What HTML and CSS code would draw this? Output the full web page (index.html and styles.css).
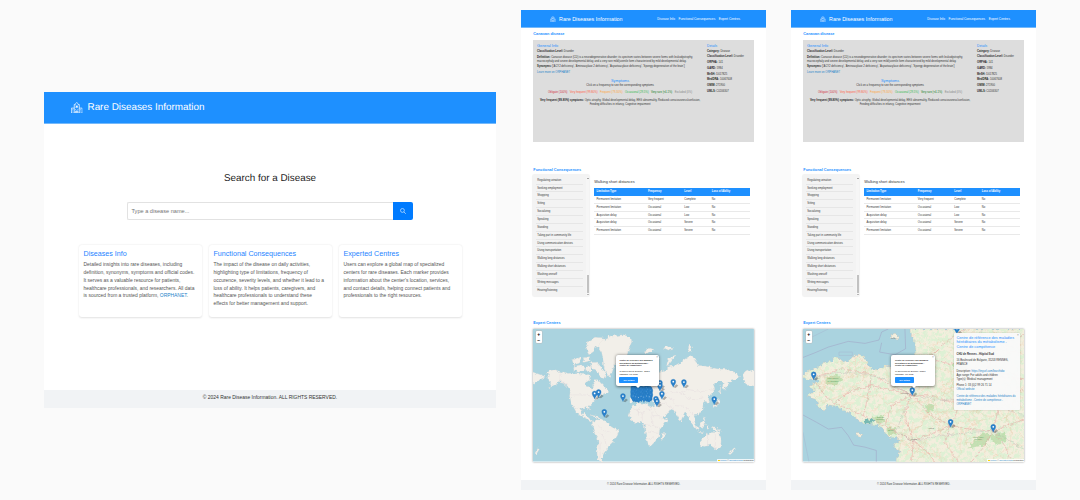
FILE: index.html
```html
<!DOCTYPE html>
<html lang="en">
<head>
<meta charset="utf-8">
<title>Rare Diseases Information</title>
<link rel="stylesheet" href="styles.css">
</head>
<body>
<svg class="defs" aria-hidden="true">
  <defs>
    <symbol id="hospital" viewBox="0 0 16 16">
      <g fill="none" stroke="#fff" stroke-width="1">
        <path d="M4.5 15.5V3.5h1.5V2.5L8 .7l2 1.8v1h1.500v12M.5 15.500v-7h4M11.500 8.500h4v7M0 15.500h16M6.500 15.500v-3h3v3M8 15.500v-3"/>
        <path d="M8 4.500v4M6.200 5.500l3.600 2M9.800 5.500l-3.600 2"/>
        <path d="M2 10.500h1M2 12.500h1M13 10.500h1M13 12.500h1M6 10.500h1M9 10.500h1"/>
      </g>
    </symbol>
    <g id="pin">
      <path d="M1 0 L9 -9 15 -5 7 2Z" fill="#000" opacity=".28"/>
      <path d="M0 0C-2-7-7.500-10-7.500-16.500A7.500 7.500 0 0 1 7.500-16.500C7.500-10 2-7 0 0Z" fill="#2a81cb" stroke="#2472b4" stroke-width=".8"/>
      <circle cx="0" cy="-16.500" r="2.700" fill="#fff"/>
    </g>
    <g id="cluster-pin">
      <path d="M0 0C-2-7-7.500-10-7.500-16.500A7.500 7.500 0 0 1 7.500-16.500C7.500-10 2-7 0 0Z" fill="#2a81cb" stroke="#2472b4" stroke-width=".8"/>
      <circle cx="0" cy="-16.500" r="1.700" fill="#9cc8ea"/>
    </g>
    <filter id="rough" x="-5%" y="-5%" width="110%" height="110%">
      <feTurbulence type="fractalNoise" baseFrequency=".09" numOctaves="3" seed="4"/>
      <feDisplacementMap in="SourceGraphic" scale="14" xChannelSelector="R" yChannelSelector="G"/>
    </filter>
    <filter id="fields" x="0" y="0" width="100%" height="100%">
      <feTurbulence type="fractalNoise" baseFrequency=".075" numOctaves="4" seed="9"/>
      <feColorMatrix values="0 0 0 0 .73  0 0 0 0 .87  0 0 0 0 .66  6 0 0 0 -2.600"/>
      <feComposite in2="SourceGraphic" operator="in"/>
    </filter>
  </defs>
</svg>

<main class="board">
  <section class="home">
    <header class="home-header"><svg><use href="#hospital"/></svg><span>Rare Diseases Information</span></header>
    <div class="home-body">
      <h1>Search for a Disease</h1>
      <div class="search">
        <div class="search-input">Type a disease name...</div>
        <div class="search-button"><svg viewBox="0 0 16 16"><circle cx="6.500" cy="6.500" r="5.200"/><path d="M10.500 10.500l5 5"/></svg></div>
      </div>
      <div class="cards">
        <article class="card"><h2>Diseases Info</h2><p>Detailed insights into rare diseases, including<br>definition, synonyms, symptoms and official codes.<br>It serves as a valuable resource for patients,<br>healthcare professionals, and researchers. All data<br>is sourced from a trusted platform, <a>ORPHANET</a>.</p></article>
        <article class="card"><h2>Functional Consequences</h2><p>The impact of the disease on daily activities,<br>highlighting type of limitations, frequency of<br>occurence, severity levels, and whether it lead to a<br>loss of ability. It helps patients, caregivers, and<br>healthcare professionals to understand these<br>effects for better management and support.</p></article>
        <article class="card"><h2>Experted Centres</h2><p>Users can explore a global map of specialized<br>centers for rare diseases. Each marker provides<br>information about the center's location, services,<br>and contact details, helping connect patients and<br>professionals to the right resources.</p></article>
      </div>
    </div>
    <footer class="home-footer">© 2024 Rare Disease Information. ALL RIGHTS RESERVED.</footer>
  </section>

  <section class="detail" data-map="world"></section>
  <section class="detail" data-map="region"></section>
</main>

<template id="detail-template">
  <header class="detail-header">
    <div class="brand"><svg><use href="#hospital"/></svg><span>Rare Diseases Information</span></div>
    <nav><span>Disease Info</span><span>Functional Consequences</span><span>Expert Centres</span></nav>
  </header>
  <h2 class="section-title first">Canavan disease</h2>
  <div class="info">
    <div class="info-main">
      <h3>General Info</h3>
      <p><b>Classification Level:</b> Disorder</p>
      <p class="gap"><b>Definition:</b> Canavan disease (CD) is a neurodegenerative disorder; its spectrum varies between severe forms with leukodystrophy,<br>macrocephaly and severe developmental delay, and a very rare mild/juvenile form characterized by mild developmental delay.</p>
      <p class="gap"><b>Synonyms:</b> ['ACY2 deficiency', 'Aminoacylase 2 deficiency', 'Aspartoacylase deficiency', 'Spongy degeneration of the brain']</p>
      <p class="gap"><a>Learn more on ORPHANET</a></p>
      <h3 class="symptoms">Symptoms</h3>
      <p class="center">Click on a frequency to see the corresponding symptoms</p>
      <div class="frequencies"><span class="f-red">Obligate (100%)</span><span class="f-tomato">Very frequent (99-80%)</span><span class="f-orange">Frequent (79-30%)</span><span class="f-lime">Occasional (29-5%)</span><span class="f-green">Very rare (&lt;4-1%)</span><span class="f-grey">Excluded (0%)</span></div>
      <p class="center"><b>Very frequent (99-80%) symptoms:</b> Optic atrophy, Global developmental delay, EEG abnormality, Reduced consciousness/confusion,<br>Feeding difficulties in infancy, Cognitive impairment</p>
    </div>
    <div class="info-side">
      <h3>Details</h3>
      <p><b>Category:</b> Disease</p><p><b>Classification Level:</b> Disorder</p><p><b>ORPHA:</b> 141</p><p><b>GARD:</b> 5984</p><p><b>MeSH:</b> D017825</p><p><b>MedDRA:</b> 10067608</p><p><b>OMIM:</b> 271900</p><p><b>UMLS:</b> C0206307</p>
    </div>
  </div>
  <h2 class="section-title second">Functional Consequences</h2>
  <div class="consequences">
    <div class="activity-list">
      <ul><li>Regulating urination</li><li>Seeking employment</li><li>Shopping</li><li>Sitting</li><li>Socializing</li><li>Speaking</li><li>Standing</li><li>Taking part in community life</li><li>Using communication devices</li><li>Using transportation</li><li>Walking long distances</li><li>Walking short distances</li><li>Washing oneself</li><li>Writing messages</li><li>Hearing/listening</li></ul>
      <div class="scrollbar"><i class="up"></i><i class="thumb"></i><i class="down"></i></div>
    </div>
    <div class="limitations">
      <h4>Walking short distances</h4>
      <div class="row head"><span>Limitation Type</span><span>Frequency</span><span>Level</span><span>Loss of Ability</span></div>
      <div class="row"><span>Permanent limitation</span><span>Very frequent</span><span>Complete</span><span>No</span></div>
      <div class="row"><span>Permanent limitation</span><span>Occasional</span><span>Low</span><span>No</span></div>
      <div class="row"><span>Acquisition delay</span><span>Occasional</span><span>Low</span><span>No</span></div>
      <div class="row"><span>Acquisition delay</span><span>Occasional</span><span>Severe</span><span>No</span></div>
      <div class="row"><span>Permanent limitation</span><span>Occasional</span><span>Severe</span><span>No</span></div>
    </div>
  </div>
  <h2 class="section-title third">Expert Centres</h2>
  <div class="map">
    <div class="zoom-control"><span>+</span><span>−</span></div>
    <div class="popup"><i class="close">×</i><b>Centre de référence des maladies<br>héréditaires du métabolisme -<br>Centre de compétence</b><p>16 Boulevard de Bulgarie, 35203<br>RENNES, FRANCE</p><span class="popup-button">See details</span></div>
    <div class="attribution"><i class="flag"></i><a>Leaflet</a> | © <a>OpenStreetMap</a> contributors</div>
  </div>
  <footer class="detail-footer">© 2024 Rare Disease Information. ALL RIGHTS RESERVED.</footer>
</template>

<template id="world-map">
  <svg class="map-canvas" viewBox="54 41 663 396" preserveAspectRatio="none">
    <rect x="54" y="41" width="663" height="396" fill="#aad3df"/>
    <g fill="#f2efe9" stroke="#dfd8d6" stroke-width=".8" filter="url(#rough)">
      <path d="M97 172L105 165 120 163 135 168 160 174 185 172 200 177 215 174 228 182 222 192 212 198 213 208 222 214 230 224 232 212 240 200 248 192 258 203 268 213 277 222 278 230 262 236 250 246 240 254 234 262 222 272 224 286 216 276 200 276 196 286 204 298 212 292 216 300 222 308 236 318 228 316 212 308 196 300 184 290 176 275 168 258 164 242 166 226 158 212 146 202 132 198 118 208 100 218 112 206 104 198 96 192 104 182Z"/>
      <path d="M48 168L72 176 92 184 80 190 68 196 60 204 48 198Z"/>
      <path d="M172 134L195 126 198 142 176 148ZM178 152L205 148 212 162 190 170 176 164ZM205 128L222 124 226 136 208 140ZM212 100L222 76 240 66 268 68 262 82 246 92 236 108 222 118ZM226 142L246 140 262 158 272 174 268 190 254 184 246 168 230 160ZM214 152L224 150 226 166 216 168Z"/>
      <path d="M248 92L262 75 290 62 325 58 347 66 350 80 342 100 336 120 312 134 297 150 290 172 282 184 272 170 266 150 264 130 260 110Z"/>
      <path d="M232 320L245 312 262 313 278 322 290 334 312 344 308 358 298 374 288 384 278 398 268 410 262 422 260 438 248 432 246 410 250 388 248 368 238 352 234 338Z"/>
      <path d="M352 270L370 262 392 264 408 272 426 272 438 296 446 308 458 310 446 328 434 342 432 362 420 378 408 390 400 388 394 368 390 344 388 328 378 320 360 320 348 312 342 298Z"/>
      <path d="M440 356l8-8 2 10-6 16-6-4ZM400 150L415 118 430 128 432 160 418 182 400 190ZM345 262V244L372 240 368 228 385 218 430 205 432 262 412 258 402 246 385 240 370 260Z"/>
      <path d="M415 212L428 180 432 168 452 164 465 152 480 150 495 142 508 132 525 122 542 130 550 150 575 152 605 160 635 162 660 170 677 182 665 192 650 196 640 206 630 225 623 214 625 200 610 198 596 208 600 220 590 234 580 247 584 260 575 264 570 256 563 263 565 280 553 297 537 300 540 312 536 327 525 314 517 298 509 290 497 318 487 300 480 288 465 282 456 296 437 312 423 290 415 272 420 256 410 240Z"/>
      <path d="M683 174L700 163 722 168V212L695 208 687 195ZM557 374L571 360 587 350 601 350 609 346 619 372 617 392 603 402 587 388 571 392 557 390Z"/>
      <path d="M528 320l8 0 14 18-4 4ZM552 330l12-14 8 10-10 12ZM575 330l6 0 0 12-6-4ZM592 332l16 4 12 12-20-6ZM562 300l8 6 4 14-8-8ZM546 346l20 2-2 3-18-2ZM596 270l8-4 6-16 3-2 2 14-14 12ZM614 210l4 22-4 0ZM642 412l16-16 4 4-15 16ZM60 412l10-16 3 4-9 15ZM225 298l22 4 10 6-14-2ZM455 150l6-18 16-14 3 4-17 20-4 12ZM445 98l16-6 16 6-20 6ZM516 104l8-16 6 12-2 10ZM385 110l18-12 14 4-14 12Z"/>
    </g>
    <g fill="none" stroke="#ddd0d7" stroke-width=".9" filter="url(#rough)">
      <path d="M135 170V196L160 208M166 238H212L230 242 252 236M180 276L205 282M250 330L266 346 286 350M252 350L270 372 274 392M255 378L256 430M352 278L382 292 382 318M382 292L408 276 412 300 438 300M388 328L415 330 434 338M400 346L430 350M396 370L420 366M408 300L415 330M372 262L370 300M420 256L450 262 478 282M440 238L470 228 500 232 520 222 560 228 598 222M500 232L520 248 550 250 565 246M480 270L510 272 535 296M456 240L480 260M578 350V392M601 350V402M415 214L440 220 452 238"/>
    </g>
    <path d="M347 222L412 215V254L400 259 385 252 370 259 354 258 347 244Z" fill="#2a7fc6"/>
    <g class="pins"></g>
  </svg>
</template>

<template id="region-map">
  <svg class="map-canvas" viewBox="54 41 663 396" preserveAspectRatio="none">
    <defs><clipPath id="coast"><path id="land" d="M54 182L62 170 90 160 110 152 118 140 140 138 148 128 165 130 178 142 200 128 222 116 238 126 250 150 262 160 282 164 300 150 318 156 340 170 380 165 396 150 392 122 392 88 383 62 374 41H730V450H332L336 422 346 408 326 396 330 384 346 374 334 362 315 366 298 348 290 334 268 326 240 324 214 310 200 296 175 282 150 270 130 268 114 286 98 272 96 252 66 242 92 224 72 214 84 204 104 198 94 190 66 192Z"/></clipPath></defs>
    <rect x="54" y="41" width="663" height="396" fill="#aad3df"/>
    <g fill="none" stroke="#9b83b5" stroke-width="1.300" opacity=".75"><path d="M54 126L90 112 130 95 190 78 240 84 282 74 290 50 310 41M290 82L284 110 330 118 362 100 360 41M54 298L95 320 130 340 170 335 190 360 206 388 240 394 274 404V438"/><path d="M130 41L54 78M54 350L72 438M162 110h40v10h-40Z" stroke-width=".7"/></g>
    <g filter="url(#rough)">
      <g fill="#f3eedd" stroke="#c3b9b0" stroke-width="1"><use href="#land"/><path d="M214 352l6-2 14 6-8 6-12-5ZM318 58l12-4 12 7-4 10-18-2Z"/></g>
      <g clip-path="url(#coast)">
        <rect x="54" y="41" width="676" height="410" fill="#fff" filter="url(#fields)"/>
        <g fill="#b4d8a2" opacity=".7"><path d="M124 188L155 174 172 190 152 208 126 206ZM262 306L290 296 302 318 278 324ZM304 338L330 334 334 356 310 358ZM548 398L590 350 620 356 604 388ZM500 150L540 130 550 160 520 180ZM420 270L440 262 450 280 430 290ZM610 360L660 350 665 374 630 386Z"/></g>
        <g class="minor-roads" fill="none" stroke="#ecc39f" stroke-width=".8"></g>
        <g fill="none" stroke="#e39a9a" stroke-width="1.300"><path d="M85 184L120 176 170 160 220 168 260 176 310 205 380 237 440 242 500 260 560 244 620 242 717 224M85 184L112 230 145 262 190 280 235 300 300 330 385 376 450 350 497 330 560 342 625 345 717 310M380 237L360 300 385 376 380 438M380 237L390 180 430 130 470 90 540 41M497 330L520 280 560 244 600 180 640 90 717 60M385 376L430 410 450 438M497 330L480 380 520 438M625 345L600 390 560 438M625 345L660 390 680 438M625 345L640 280 620 242M430 130L520 150 600 180 717 190M235 300L250 240 260 176M300 330L320 270 380 237M145 262L200 225 260 210 380 237M497 330L440 300 380 237"/></g>
        <g fill="none" stroke="#a9a7aa" stroke-width=".9"><path d="M85 190L150 170 230 174 300 190 380 240 470 255 560 248 717 300M380 240L350 300 335 350 385 376 460 360 560 350 625 345M625 345L717 400M560 248L590 41"/></g>
        <path d="M236 312l12-4 4 8 12-6 6 8-10 6-20-2Z" fill="#78b9b2"/>
      </g>
    </g>
    <g class="labels" fill="#6f746d" font-size="6" text-anchor="middle"><text x="360" y="236">Rennes</text><text x="386" y="374">Nantes</text><text x="438" y="340">Angers</text><text x="144" y="190" fill="#5b985b">Parc naturel</text><text x="144" y="198" fill="#5b985b">d'Armorique</text><text x="286" y="306" fill="#5b985b">Golfe du</text><text x="286" y="314" fill="#5b985b">Morbihan</text><text x="318" y="346" fill="#5b985b">Brière</text><text x="327" y="72">Jersey</text><text x="580" y="366" fill="#5b985b">Loire-Anjou</text><text x="580" y="374" fill="#5b985b">Touraine</text></g>
    <g class="pins"></g>
  </svg>
  <aside class="centre-panel"><i class="close">×</i><h4>Centre de référence des maladies<br>héréditaires du métabolisme -<br>Centre de compétence</h4><p><b>CHU de Rennes - Hôpital Sud</b></p><p>16 Boulevard de Bulgarie, 35203 RENNES,<br>FRANCE</p><p>Description: <a>https://tinyurl.com/bxzchtdw</a><br>Age range: For adults and children<br>Type(s): Medical management</p><p>Phone 1: 33 (0)2 99 26 71 14<br><a>Official website</a></p><p><a>Centre de référence des maladies héréditaires du<br>métabolisme - Centre de compétence -<br>ORPHANET</a></p></aside>
</template>
<script src="script.js"></script>
</body>
</html>
```
FILE: styles.css
```css
* { box-sizing: border-box; }
body { margin: 0; width: 1080px; height: 500px; overflow: hidden; background: #fafafa; color: #333; font-family: "Liberation Sans", Arial, sans-serif; }
h1, h2, h3, h4, p, ul { margin: 0; padding: 0; font-weight: 400; }
i { font-style: normal; }
a { color: #2483c9; }
.defs { position: absolute; width: 0; height: 0; }
.board { display: flex; align-items: flex-start; height: 500px; padding-left: 44px; }

.home { display: flex; flex-direction: column; width: 452px; height: 316px; margin-top: 92px; margin-right: 25.3px; background: #fff; font-size: 4.94px; }
.home-header { display: flex; align-items: center; gap: 5px; height: 32px; padding-left: 27px; background: #1e90ff; border-bottom: 1px solid #74b9fb; color: #fff; font-size: 9.9px; text-rendering: geometricPrecision; }
.home-header svg { width: 11.5px; height: 11.500px; }
.home-body { flex: 1; display: flex; flex-direction: column; align-items: center; padding-top: 49px; }
.home-body h1 { font-size: 9.9px; line-height: 12px; color: #222; text-rendering: geometricPrecision; }
.search { display: flex; width: 286px; height: 18px; margin-top: 17px; }
.search-input { flex: 1; padding-left: 3.500px; border: 1px solid #e2e2e2; border-right: 0; border-radius: 2px 0 0 2px; color: #757575; font-size: 5.600px; line-height: 16.500px; }
.search-button { display: grid; place-items: center; width: 20px; background: #007bff; border-radius: 0 2px 2px 0; }
.search-button svg { width: 6px; height: 6px; fill: none; stroke: #fff; stroke-width: 1.500; }
.cards { display: grid; grid-template-columns: repeat(3, 123px); gap: 7px; margin-top: 24.500px; }
.card { height: 72px; padding: 5.300px 5px 0; border-radius: 3px; background: #fff; box-shadow: 0 .7px 2px rgba(0, 0, 0, .12); }
.card h2 { color: #1e83ff; font-size: 7.150px; line-height: 9px; margin-bottom: 1.900px; }
.card p { line-height: 7.930px; color: #555; white-space: nowrap; }
.home-footer { height: 18px; background: #f1f3f5; text-align: center; line-height: 15.500px; }

.detail { display: flex; flex-direction: column; width: 244.700px; height: 480px; margin-top: 10px; margin-right: 25.300px; background: #fff; font-size: 2.690px; line-height: 4.100px; flex-shrink: 0; }
.detail p { white-space: nowrap; }
.detail-header { display: flex; justify-content: space-between; align-items: center; height: 18px; padding: .8px 25px 0 29px; background: #1e90ff; border-bottom: .8px solid #74b9fb; color: #fff; }
.brand { display: flex; align-items: center; gap: 3px; font-size: 5.360px; }
.brand svg { width: 5.800px; height: 5.800px; }
.detail-header nav { display: flex; gap: 3.600px; margin-right: 1px; padding-top: .6px; font-size: 3.180px; }
.section-title { margin: 0 12px; height: 5px; color: #1e90ff; font-size: 3.850px; font-weight: 700; line-height: 5px; }
.section-title.first { margin-top: 4.200px; }
.info { display: flex; gap: 4px; height: 102.700px; margin: 2.600px 12px 0; padding: 4.700px 0 0 3.800px; background: #ddd; color: #333; }
.info b, .consequences b { color: #222; }
.info-main { width: 166px; }
.info h3 { color: #1e90ff; font-size: 3.850px; line-height: 5px; }
.info-main h3:first-child { margin-bottom: .4px; }
.info-main .gap { margin-top: 1.600px; }
.info-main h3.symptoms { margin-top: 3.700px; text-align: center; }
.center { text-align: center; }
.frequencies { display: flex; justify-content: center; gap: 2.400px; margin: 3.600px 0 3.500px; white-space: nowrap; }
.f-red { color: #d32f3f; } .f-tomato { color: #ff6347; } .f-orange { color: #ffa53b; } .f-lime { color: #32b84d; } .f-green { color: #168022; } .f-grey { color: #888; }
.info-side p { margin-bottom: 1.650px; }
.info-side h3 { font-size: 3.300px; line-height: 4.700px; margin-bottom: .5px; }
.section-title.second { margin-top: 25.500px; }
.consequences { display: flex; gap: 5px; height: 121px; margin: 2.300px 12px 0; }
.activity-list { display: flex; justify-content: space-between; width: 56px; padding: 1.400px 0 0 3px; background: #f3f3f3; box-shadow: 0 0 1.500px rgba(0, 0, 0, .18); }
.activity-list ul { width: 47px; list-style: none; }
.activity-list li { height: 7.870px; padding-left: 1px; border-bottom: .5px solid #e6e6e6; line-height: 8px; }
.activity-list li:last-child { border: 0; }
.scrollbar { display: flex; flex-direction: column; align-items: center; width: 3px; background: #f6f6f6; }
.scrollbar .up, .scrollbar .down { border: .8px solid transparent; }
.scrollbar .up { border-bottom-color: #555; }
.scrollbar .down { border-top-color: #777; margin-top: 1px; }
.thumb { width: 2px; height: 18px; margin-top: 96.500px; background: #c1c1c1; }
.limitations { width: 156px; padding-top: 5px; }
.limitations h4 { height: 7.700px; font-size: 3.830px; line-height: 5px; }
.row { display: grid; grid-template-columns: 51.400px 36.400px 27.500px 1fr; height: 7.870px; padding-left: 2.200px; border-bottom: .5px solid #e9e9e9; line-height: 8.500px; }
.row.head { background: #1e90ff; color: #fff; font-weight: 700; border: 0; }
.section-title.third { margin-top: 24.300px; }

.map { position: relative; width: 220.900px; height: 132.500px; margin: 3.500px 12px 0; overflow: hidden; box-shadow: 0 0 2px rgba(0, 0, 0, .4); flex-shrink: 0; }
.map-canvas { display: block; width: 100%; height: 100%; }
.zoom-control { position: absolute; left: 2.500px; top: 2px; display: grid; width: 6px; height: 12px; background: #fff; border-radius: 1px; box-shadow: 0 0 0 .4px #bbb; color: #000; font-size: 5px; font-weight: 700; line-height: 6px; text-align: center; }
.popup { position: absolute; left: 82.300px; top: 26.300px; width: 43.500px; height: 31px; padding: 3.500px 3.800px 0; background: #fff; border-radius: 2px; box-shadow: 0 .7px 3px rgba(0, 0, 0, .5); color: #222; font-size: 2.080px; line-height: 2.750px; white-space: nowrap; }
.popup::after { content: ""; position: absolute; left: 20.500px; top: 31px; border: 2px solid transparent; border-top-color: #fff; }
.popup p { margin: 2.800px 0 1.200px; }
.popup-button { display: block; width: 19px; height: 6.500px; border-radius: .8px; background: #1e90ff; color: #fff; font-weight: 700; line-height: 7px; text-align: center; }
.close { position: absolute; right: 1px; top: 1px; color: #777; font-size: 3px; line-height: 3px; }
[data-map="region"] .popup { left: 88px; }
.attribution { position: absolute; right: 0; bottom: 0; display: flex; align-items: center; gap: .4px; padding: 0 .7px; background: rgba(255, 255, 255, .8); font-size: 1.950px; line-height: 2.800px; }
.flag { width: 1.800px; height: 1.300px; background: linear-gradient(#4c7be1 50%, #ffd500 50%); }
.centre-panel { position: absolute; left: 150.500px; top: 4.200px; width: 66px; height: 76.300px; padding: 2.500px 2.700px; background: rgba(249, 249, 249, .96); border-radius: 1px; box-shadow: 0 0 1.500px rgba(0, 0, 0, .25); line-height: 4.080px; }
.centre-panel h4 { color: #1e90ff; font-size: 3.830px; line-height: 4.700px; margin-bottom: 3px; white-space: nowrap; }
.centre-panel p { margin-top: 2.300px; }
.detail-footer { height: 9.700px; margin-top: auto; background: #f1f3f5; line-height: 9.200px; text-align: center; }
```
FILE: script.js
```js
const clone = id => document.getElementById(id).content.cloneNode(true);
const markers = {
  world: [[239,250],[251,246],[268,305],[324,258],[435,218],[435,226],[475,215],[507,216],[441,251],[598,267],[423,266],[426,273]],
  region: [[516,56],[86,193],[382,240],[497,335],[625,350]]
};

// Densely packed centres across western Europe.
const cluster = [];
for (let row = 0; row < 5; row++) {
  for (let col = 0; col < 7; col++) {
    cluster.push([355 + col * 8 + (row % 2) * 3, 234 + row * 6 + (col * 7 % 5)]);
  }
}

document.querySelectorAll('.detail').forEach(section => {
  const kind = section.dataset.map;
  section.append(clone('detail-template'));
  section.querySelector('.map').prepend(clone(kind + '-map'));
  const packed = kind === 'world' ? cluster : [];
  section.querySelector('.pins').innerHTML =
    packed.map(([x, y]) => `<use href="#cluster-pin" x="${x}" y="${y}"/>`).join('') +
    markers[kind].map(([x, y]) => `<use href="#pin" x="${x}" y="${y}"/>`).join('');
});

// Secondary road network drawn from a fixed sequence.
let seed = 17;
const next = () => (seed = (seed * 16807) % 2147483647) / 2147483647;
let roads = '';
for (let n = 0; n < 230; n++) {
  let x = 54 + next() * 663, y = 41 + next() * 397;
  let angle = next() * 6.28;
  roads += `M${x.toFixed(1)} ${y.toFixed(1)}`;
  for (let k = 0; k < 5; k++) {
    angle += next() - .5;
    x += Math.cos(angle) * 16;
    y += Math.sin(angle) * 16;
    roads += `L${x.toFixed(1)} ${y.toFixed(1)}`;
  }
}
document.querySelector('.minor-roads').innerHTML = `<path d="${roads}"/>`;
```
